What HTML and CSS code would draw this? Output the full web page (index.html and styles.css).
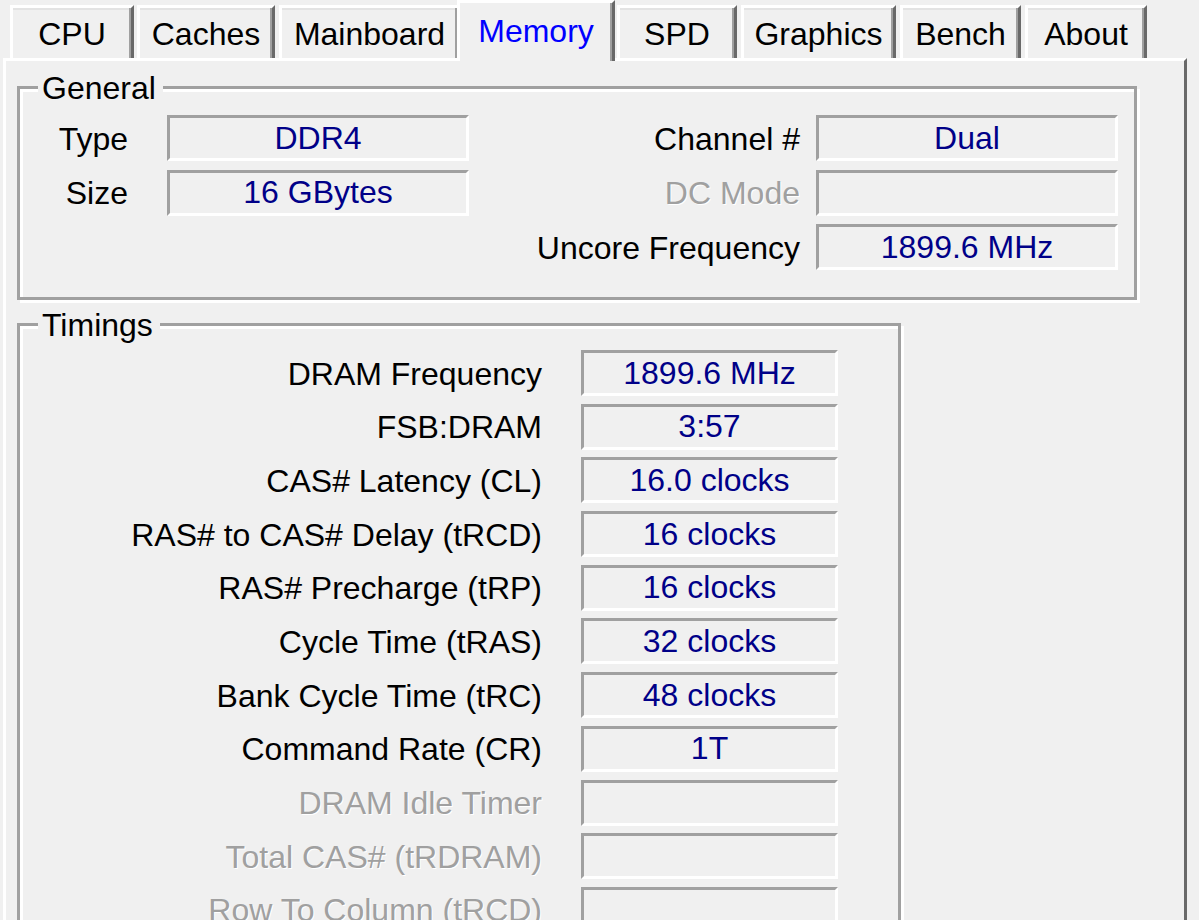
FILE: index.html
```html
<!DOCTYPE html>
<html>
<head>
<meta charset="utf-8">
<link rel="stylesheet" href="styles.css">
</head>
<body>
<div class="window">
  <div class="tabs">
    <div class="tab t-cpu">CPU</div>
    <div class="tab t-caches">Caches</div>
    <div class="tab t-mainboard">Mainboard</div>
    <div class="tab active t-memory">Memory</div>
    <div class="tab t-spd">SPD</div>
    <div class="tab t-graphics">Graphics</div>
    <div class="tab t-bench">Bench</div>
    <div class="tab t-about">About</div>
  </div>
  <div class="panel">
    <fieldset class="group general">
      <legend>General</legend>
      <div class="general-grid">
        <span class="lbl lbl-l">Type</span>
        <span class="field">DDR4</span>
        <span class="lbl lbl-r">Channel #</span>
        <span class="field">Dual</span>

        <span class="lbl lbl-l">Size</span>
        <span class="field">16 GBytes</span>
        <span class="lbl lbl-r disabled">DC Mode</span>
        <span class="field"></span>

        <span class="lbl lbl-r col3">Uncore Frequency</span>
        <span class="field">1899.6 MHz</span>
      </div>
    </fieldset>

    <fieldset class="group timings">
      <legend>Timings</legend>
      <div class="timings-grid">
        <span class="lbl">DRAM Frequency</span><span class="field">1899.6 MHz</span>
        <span class="lbl">FSB:DRAM</span><span class="field">3:57</span>
        <span class="lbl">CAS# Latency (CL)</span><span class="field">16.0 clocks</span>
        <span class="lbl">RAS# to CAS# Delay (tRCD)</span><span class="field">16 clocks</span>
        <span class="lbl">RAS# Precharge (tRP)</span><span class="field">16 clocks</span>
        <span class="lbl">Cycle Time (tRAS)</span><span class="field">32 clocks</span>
        <span class="lbl">Bank Cycle Time (tRC)</span><span class="field">48 clocks</span>
        <span class="lbl">Command Rate (CR)</span><span class="field">1T</span>
        <span class="lbl disabled">DRAM Idle Timer</span><span class="field"></span>
        <span class="lbl disabled">Total CAS# (tRDRAM)</span><span class="field"></span>
        <span class="lbl disabled">Row To Column (tRCD)</span><span class="field"></span>
      </div>
    </fieldset>
  </div>
</div>
</body>
</html>
```
FILE: styles.css
```css
html, body {
  margin: 0;
  padding: 0;
  height: 920px;
  overflow: hidden;
  background: #f0f0f0;
}

body {
  font-family: "Liberation Sans", Arial, sans-serif;
  font-size: 32px;
  color: #000;
}

.window {
  width: 1199px;
}

/* ---------- tabs ---------- */
.tabs {
  display: flex;
  align-items: flex-end;
  height: 58px;
  padding-left: 10px;
  position: relative;
  z-index: 1;
}

.tab {
  box-sizing: border-box;
  height: 53px;
  padding-top: 8px;
  text-align: center;
  border-left: 3px solid #fff;
  border-top: 3px solid #fff;
  border-right: 3px solid #696969;
  box-shadow: inset -2px 0 0 #a0a0a0, inset 0 2px 0 #e3e3e3;
  background: #f0f0f0;
  white-space: nowrap;
}

.tab.active {
  height: 61px;
  margin-bottom: -3px;
  padding-top: 10px;
  color: #0000ff;
  box-shadow: inset -2px 0 0 #a0a0a0;
  z-index: 2;
}

.t-cpu { width: 124px; }
.t-caches { width: 138px; margin-left: 3px; }
.t-mainboard { width: 181px; margin-left: 4px; }
.t-memory { width: 158px; margin-left: -3px; }
.t-spd { width: 120px; margin-left: 2px; }
.t-graphics { width: 155px; margin-left: 4px; }
.t-bench { width: 121px; margin-left: 4px; }
.t-about { width: 122px; margin-left: 4px; }

/* ---------- panel ---------- */
.panel {
  box-sizing: border-box;
  margin-left: 3px;
  width: 1184px;
  min-height: 900px;
  border-top: 3px solid #fff;
  border-left: 3px solid #fff;
  border-right: 3px solid #696969;
  padding: 10.5px 0 0 11px;
}

.group {
  box-sizing: border-box;
  margin: 0;
  padding: 0;
  min-width: 0;
  border: 3px solid #a0a0a0;
  box-shadow: inset 3px 3px 0 #fff, 3px 3px 0 #fff;
}

.group legend {
  margin-left: 18px;
  padding: 0 7px 0 4px;
  line-height: 32px;
  background: #f0f0f0;
}

.general {
  width: 1120px;
}

.timings {
  width: 884px;
  margin-top: 8.5px;
}

.general-grid {
  display: grid;
  grid-template-columns: 147px 302px 1fr 302px;
  grid-auto-rows: 46px;
  row-gap: 8.5px;
  padding: 11.5px 16px 27px 0;
}

.timings-grid {
  display: grid;
  grid-template-columns: 1fr 257px;
  grid-auto-rows: 46px;
  row-gap: 7.7px;
  padding: 9.5px 60px 40px 0;
}

.lbl {
  display: flex;
  align-items: center;
  justify-content: flex-end;
  white-space: nowrap;
  padding-right: 39px;
  padding-top: 2px;
}

.lbl-r {
  padding-right: 16px;
}

.col3 {
  grid-column: 3;
}

.disabled {
  color: #a0a0a0;
  text-shadow: 1px 1px 0 #fff;
}

.field {
  box-sizing: border-box;
  display: flex;
  align-items: center;
  justify-content: center;
  border-style: solid;
  border-width: 3px;
  border-color: #a0a0a0 #fff #fff #a0a0a0;
  color: #000088;
  white-space: nowrap;
}
```
